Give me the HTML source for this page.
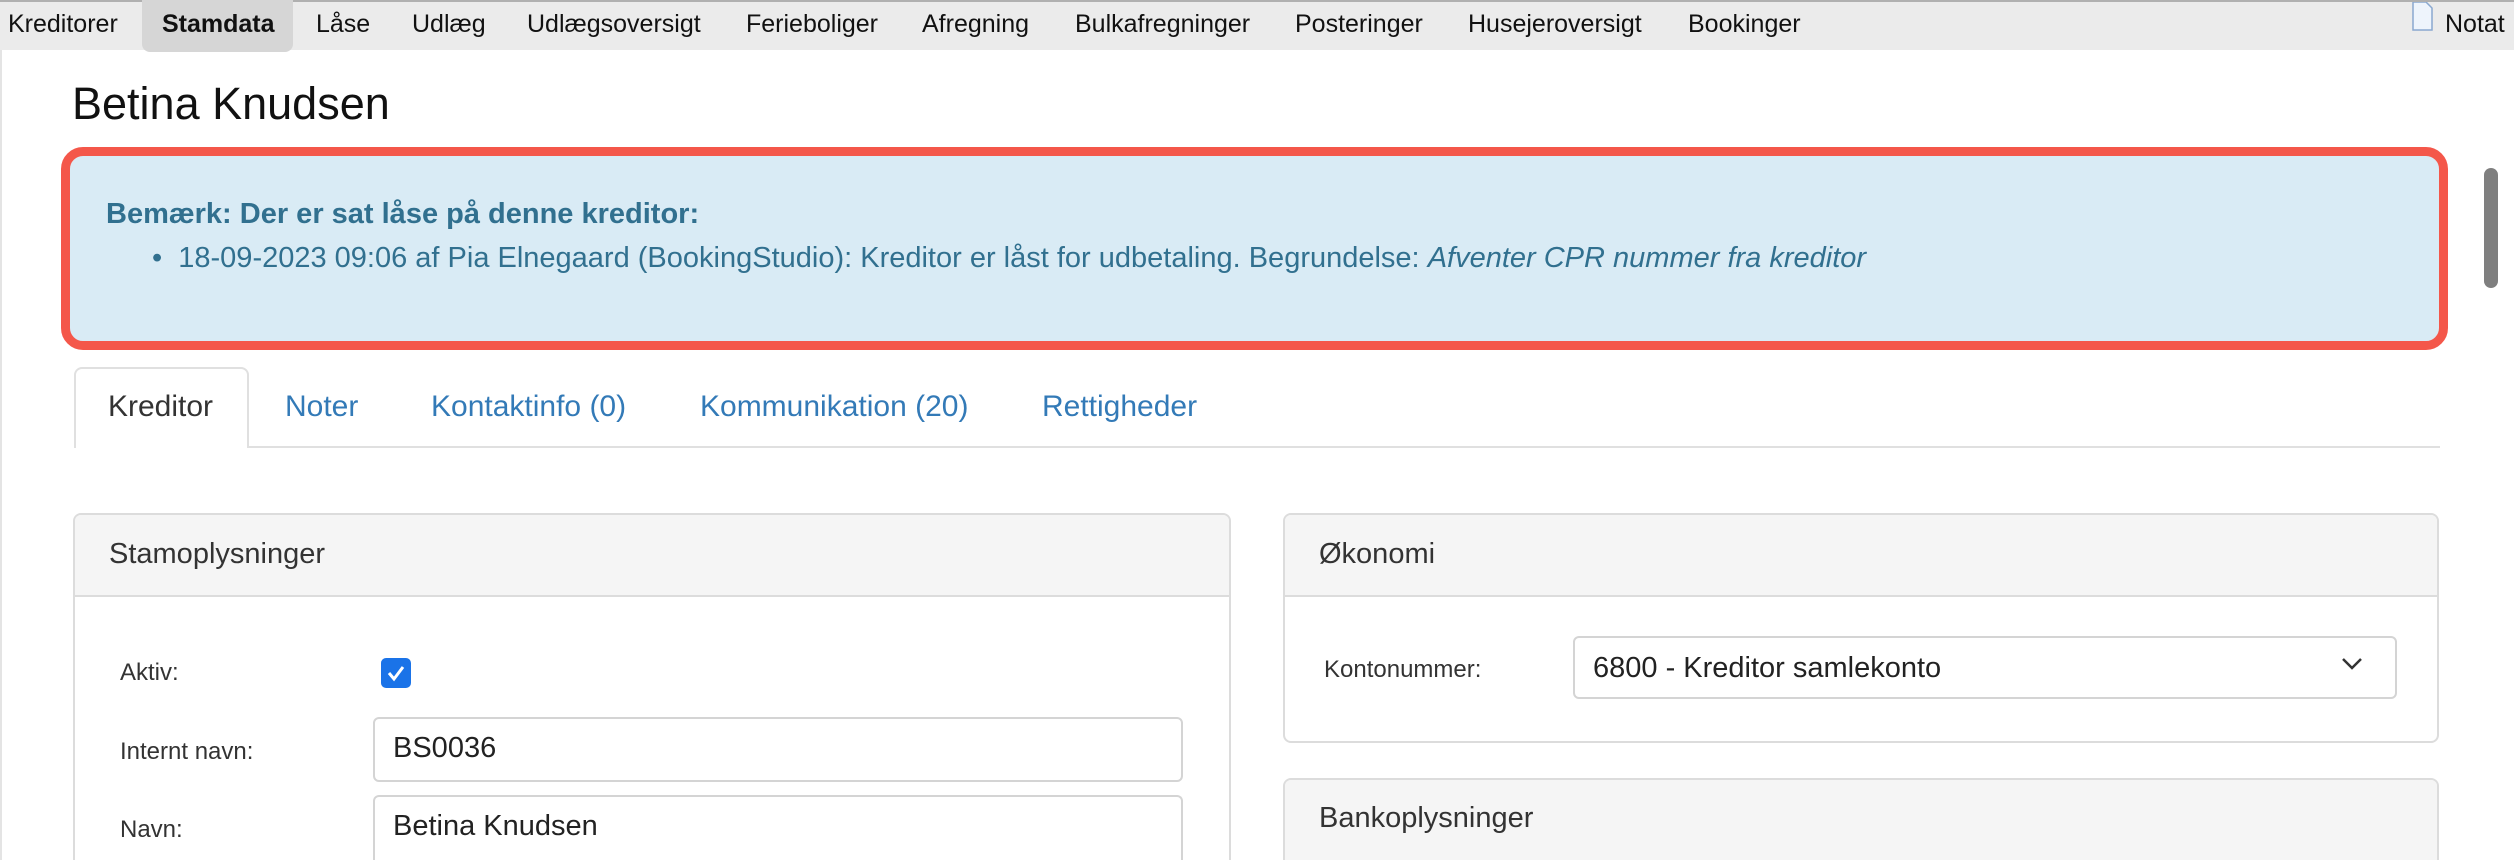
<!DOCTYPE html>
<html style="overflow:hidden"><head><meta charset="utf-8"><style>
*{box-sizing:border-box;margin:0;padding:0}
html,body{width:2514px;height:860px;overflow:hidden}
body{background:#fff;font-family:"Liberation Sans",Arial,sans-serif;color:#333}
#w{position:relative;width:2514px;height:860px;overflow:hidden}
.nav{position:absolute;left:0;top:0;width:2514px;height:50px;background:#ebebeb;border-top:2px solid #b0b0b0}
.nav span{position:absolute;top:7px;font-size:25px;color:#111;line-height:30px;white-space:nowrap}
.abs{position:absolute}
.alert{position:absolute;left:61px;top:147px;width:2387px;height:203px;border:9px solid #f4574a;border-radius:22px;background:#d9ebf5;color:#31708f;font-size:29px}
.tabs a{position:absolute;top:390px;font-size:30px;color:#337ab7;text-decoration:none}
.panel{position:absolute;border:2px solid #dcdcdc;border-radius:8px;background:#fff;overflow:hidden}
.ph{height:82px;background:#f5f5f5;border-bottom:2px solid #dcdcdc;font-size:29px;color:#333;padding:23px 0 0 34px}
.lbl{position:absolute;font-size:24px;color:#333}
.inp{position:absolute;border:2px solid #d4d4d4;border-radius:6px;font-size:29px;color:#222;padding:13px 0 0 18px;overflow:hidden}
</style></head><body><div id="w">
<div class="nav">
<div class="abs" style="left:142px;top:-2px;width:151px;height:52px;background:#d6d6d6;border-radius:0 0 8px 8px"></div>
<span style="left:8px">Kreditorer</span>
<span style="left:162px;font-weight:bold">Stamdata</span>
<span style="left:316px">Låse</span>
<span style="left:412px">Udlæg</span>
<span style="left:527px">Udlægsoversigt</span>
<span style="left:746px">Ferieboliger</span>
<span style="left:922px">Afregning</span>
<span style="left:1075px">Bulkafregninger</span>
<span style="left:1295px">Posteringer</span>
<span style="left:1468px">Husejeroversigt</span>
<span style="left:1688px">Bookinger</span>
<svg class="abs" style="left:2412px;top:0" width="22" height="30"><path d="M1 0h13l6 6v22H1z" fill="#eef4fc" stroke="#8aa8d0" stroke-width="1.5"/></svg>
<span style="left:2445px">Notat</span>
</div>
<div class="abs" style="left:0;top:50px;width:2px;height:810px;background:#e4e4e4"></div>
<div class="abs" style="left:72px;top:78px;font-size:45px;color:#111">Betina Knudsen</div>
<div class="alert">
<div class="abs" style="left:36px;top:42px;font-weight:bold;white-space:nowrap">Bemærk: Der er sat låse på denne kreditor:</div>
<div class="abs" style="left:82px;top:86px;white-space:nowrap">•&nbsp;&nbsp;18-09-2023 09:06 af Pia Elnegaard (BookingStudio): Kreditor er låst for udbetaling. Begrundelse: <i>Afventer CPR nummer fra kreditor</i></div>
</div>
<div class="abs" style="left:2484px;top:168px;width:14px;height:120px;background:#7f7f7f;border-radius:7px"></div>
<div class="abs" style="left:74px;top:446px;width:2366px;height:2px;background:#e0e0e0"></div>
<div class="abs" style="left:74px;top:367px;width:175px;height:81px;border:2px solid #e0e0e0;border-bottom:none;border-radius:8px 8px 0 0;background:#fff"></div>
<div class="tabs">
<a style="left:108px;color:#333">Kreditor</a>
<a style="left:285px">Noter</a>
<a style="left:431px">Kontaktinfo (0)</a>
<a style="left:700px">Kommunikation (20)</a>
<a style="left:1042px">Rettigheder</a>
</div>
<div class="panel" style="left:73px;top:513px;width:1158px;height:347px;border-bottom:none;border-radius:8px 8px 0 0"><div class="ph">Stamoplysninger</div></div>
<div class="lbl" style="left:120px;top:659px">Aktiv:</div>
<div class="abs" style="left:381px;top:658px;width:30px;height:30px;background:#1a73e8;border-radius:5px"><svg width="30" height="30"><path d="M8 15l5 6 9-12" fill="none" stroke="#fff" stroke-width="3"/></svg></div>
<div class="lbl" style="left:120px;top:738px">Internt navn:</div>
<div class="inp" style="left:373px;top:717px;width:810px;height:65px">BS0036</div>
<div class="lbl" style="left:120px;top:816px">Navn:</div>
<div class="inp" style="left:373px;top:795px;width:810px;height:65px;border-bottom:none;border-radius:6px 6px 0 0">Betina Knudsen</div>
<div class="panel" style="left:1283px;top:513px;width:1156px;height:230px"><div class="ph">Økonomi</div></div>
<div class="lbl" style="left:1324px;top:656px">Kontonummer:</div>
<div class="inp" style="left:1573px;top:636px;width:824px;height:63px;padding-top:14px">6800 - Kreditor samlekonto</div>
<svg class="abs" style="left:2340px;top:656px" width="24" height="16"><path d="M3 3l9 9 9-9" fill="none" stroke="#333" stroke-width="2.5"/></svg>
<div class="panel" style="left:1283px;top:778px;width:1156px;height:82px;border-bottom:none;border-radius:8px 8px 0 0"><div class="ph" style="padding-top:22px">Bankoplysninger</div></div>
</div></body></html>
